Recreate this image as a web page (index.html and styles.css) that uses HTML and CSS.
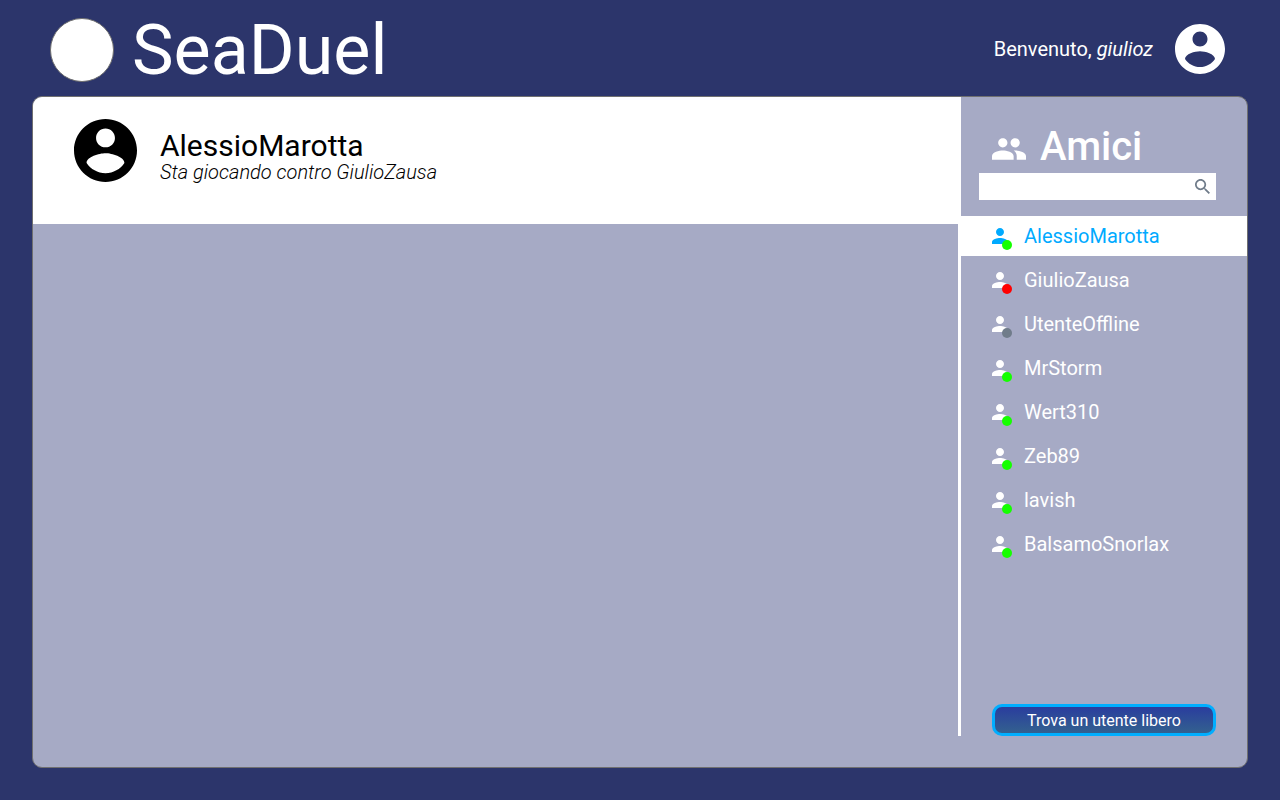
FILE: index.html
```html
<!DOCTYPE html>
<html lang="it">
<head>
<meta charset="utf-8">
<meta name="viewport" content="width=device-width, initial-scale=1">
<title>SeaDuel</title>
<link rel="stylesheet" href="styles.css">
</head>
<body class="page">
<svg class="symbols" aria-hidden="true">
  <symbol id="account" viewBox="2 2 20 20"><path d="M12 2C6.480 2 2 6.480 2 12s4.480 10 10 10 10-4.480 10-10S17.520 2 12 2zm0 3c1.660 0 3 1.340 3 3s-1.340 3-3 3-3-1.340-3-3 1.340-3 3-3zm0 14.200c-2.500 0-4.710-1.280-6-3.220.03-1.990 4-3.080 6-3.080 1.990 0 5.970 1.090 6 3.080-1.290 1.940-3.500 3.220-6 3.220z"/></symbol>
  <symbol id="people" viewBox="1 5 22 14"><path d="M16 11c1.660 0 2.990-1.340 2.990-3S17.660 5 16 5s-3 1.340-3 3 1.340 3 3 3zm-8 0c1.660 0 2.990-1.340 2.990-3S9.660 5 8 5 5 6.340 5 8s1.340 3 3 3zm0 2c-2.330 0-7 1.170-7 3.500V19h14v-2.500c0-2.330-4.670-3.500-7-3.500zm8 0c-.29 0-.62.02-.97.05 1.160.84 1.970 1.970 1.970 3.450V19h6v-2.500c0-2.330-4.670-3.500-7-3.500z"/></symbol>
  <symbol id="person" viewBox="4 4 16 16"><path d="M12 12c2.210 0 4-1.790 4-4s-1.790-4-4-4-4 1.790-4 4 1.790 4 4 4zm0 2c-2.670 0-8 1.340-8 4v2h16v-2c0-2.660-5.330-4-8-4z"/></symbol>
  <symbol id="search" viewBox="3 3 17.500 17.500"><path d="M15.500 14h-.79l-.28-.27C15.410 12.590 16 11.110 16 9.500 16 5.910 13.090 3 9.500 3S3 5.910 3 9.500 5.910 16 9.500 16c1.610 0 3.090-.59 4.230-1.570l.27.28v.79l5 4.990L20.490 19l-4.990-5zm-6 0C7.010 14 5 11.990 5 9.500S7.010 5 9.500 5 14 7.010 14 9.500 11.990 14 9.500 14z"/></symbol>
</svg>
<header class="topbar">
  <div class="brand">
    <span class="logo"></span>
    <h1 class="title">SeaDuel</h1>
  </div>
  <div class="welcome">
    <p class="greeting">Benvenuto, <em>giulioz</em></p>
    <svg class="avatar" aria-hidden="true"><use href="#account"/></svg>
  </div>
</header>
<div class="panel">
  <main class="content">
    <section class="profile">
      <svg class="portrait" aria-hidden="true"><use href="#account"/></svg>
      <div class="details">
        <h2 class="name">AlessioMarotta</h2>
        <p class="activity">Sta giocando contro GiulioZausa</p>
      </div>
    </section>
  </main>
  <aside class="sidebar">
    <h2 class="heading"><svg class="people" aria-hidden="true"><use href="#people"/></svg>Amici</h2>
    <form class="search" role="search">
      <input class="field" type="text" aria-label="Cerca">
      <button class="go" type="button" aria-label="Cerca"><svg class="lens" aria-hidden="true"><use href="#search"/></svg></button>
    </form>
    <nav class="friends">
      <a class="friend selected" href="#"><span class="who"><svg class="person" aria-hidden="true"><use href="#person"/></svg><i class="dot online"></i></span>AlessioMarotta</a>
      <a class="friend" href="#"><span class="who"><svg class="person" aria-hidden="true"><use href="#person"/></svg><i class="dot busy"></i></span>GiulioZausa</a>
      <a class="friend" href="#"><span class="who"><svg class="person" aria-hidden="true"><use href="#person"/></svg><i class="dot offline"></i></span>UtenteOffline</a>
      <a class="friend" href="#"><span class="who"><svg class="person" aria-hidden="true"><use href="#person"/></svg><i class="dot online"></i></span>MrStorm</a>
      <a class="friend" href="#"><span class="who"><svg class="person" aria-hidden="true"><use href="#person"/></svg><i class="dot online"></i></span>Wert310</a>
      <a class="friend" href="#"><span class="who"><svg class="person" aria-hidden="true"><use href="#person"/></svg><i class="dot online"></i></span>Zeb89</a>
      <a class="friend" href="#"><span class="who"><svg class="person" aria-hidden="true"><use href="#person"/></svg><i class="dot online"></i></span>lavish</a>
      <a class="friend" href="#"><span class="who"><svg class="person" aria-hidden="true"><use href="#person"/></svg><i class="dot online"></i></span>BalsamoSnorlax</a>
    </nav>
    <button class="find" type="button">Trova un utente libero</button>
  </aside>
</div>
</body>
</html>
```
FILE: styles.css
```css
* {
  box-sizing: border-box;
}

.page {
  display: flex;
  flex-direction: column;
  min-height: 100vh;
  margin: 0;
  padding: 0 32px 32px;
  background: #2c356b;
  color: #fff;
  font-family: Roboto, "Liberation Sans", sans-serif;
  font-size: 20px;
  line-height: 24px;
}

.symbols {
  display: none;
}

svg {
  display: block;
  flex: none;
  fill: currentColor;
}

h1, h2, p {
  margin: 0;
}

.topbar {
  display: flex;
  justify-content: space-between;
  align-items: flex-start;
  padding: 10px 23px 6px 18px;
}

.brand {
  display: flex;
  align-items: center;
  gap: 18px;
}

.logo {
  width: 64px;
  height: 64px;
  border: 1px solid #707070;
  border-radius: 50%;
  background: #fff;
}

.title {
  font-size: 70px;
  line-height: 80px;
  font-weight: 400;
}

.welcome {
  display: flex;
  align-items: center;
  gap: 22px;
  padding-top: 14px;
}

.avatar {
  width: 50px;
  height: 50px;
}

.panel {
  display: flex;
  flex: 1;
  overflow: hidden;
  border: 1px solid #707070;
  border-radius: 10px;
  background: #a6aac5;
}

.content {
  flex: 1;
  margin-bottom: 31px;
  border-right: 3px solid #fff;
}

.profile {
  display: flex;
  align-items: flex-start;
  gap: 23px;
  padding: 22px 41px 42px;
  background: #fff;
  color: #000;
}

.portrait {
  width: 63px;
  height: 63px;
}

.details {
  padding-top: 11px;
}

.name {
  font-size: 30px;
  line-height: 32px;
  font-weight: 400;
}

.activity {
  line-height: 20px;
  font-style: italic;
  font-weight: 300;
}

.sidebar {
  display: flex;
  flex-direction: column;
  width: 286px;
  padding-bottom: 31px;
}

.heading {
  display: flex;
  align-items: center;
  gap: 14px;
  padding: 26px 31px 2px;
  font-size: 40px;
  line-height: 48px;
  font-weight: 500;
}

.people {
  width: 34px;
  height: 22px;
  margin-top: 4px;
}

.search {
  display: flex;
  height: 27px;
  margin: 0 31px 16px 18px;
  background: #fff;
}

.field {
  flex: 1;
  min-width: 0;
  padding: 0 8px;
  border: 0;
  outline: 0;
  background: none;
  font: inherit;
}

.go {
  padding: 0 6px;
  border: 0;
  background: none;
  color: #707c8a;
}

.lens {
  width: 15px;
  height: 15px;
}

.friends {
  display: flex;
  flex: 1;
  flex-direction: column;
  gap: 4px;
}

.friend {
  display: flex;
  align-items: center;
  gap: 16px;
  padding: 8px 31px;
  color: #fff;
  text-decoration: none;
}

.selected {
  background: #fff;
  color: #00aaff;
}

.who {
  position: relative;
}

.person {
  width: 16px;
  height: 16px;
}

.dot {
  position: absolute;
  right: -4px;
  bottom: -6px;
  width: 10px;
  height: 10px;
  border-radius: 50%;
}

.online {
  background: #15ff00;
}

.busy {
  background: #ff0000;
}

.offline {
  background: #707c8a;
}

.find {
  margin: 0 31px;
  padding: 4px 8px 2px;
  border: 3px solid #00aeff;
  border-radius: 10px;
  background: linear-gradient(#2a3d9e, #33618f);
  color: #fff;
  font: 16px/20px Roboto, "Liberation Sans", sans-serif;
}
```
